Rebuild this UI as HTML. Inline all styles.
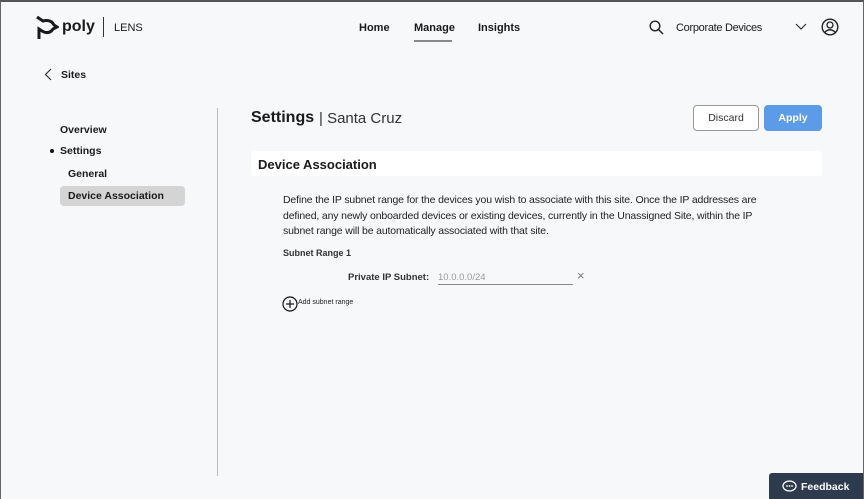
<!DOCTYPE html>
<html><head><style>
*{margin:0;padding:0;box-sizing:border-box}
body{width:864px;height:499px;overflow:hidden;background:#f7f8fa;font-family:"Liberation Sans",sans-serif;color:#1a1a1a;position:relative}
.frame{position:absolute;inset:0;border:1px solid #666;border-top:2px solid #555;border-bottom:none;pointer-events:none}
.a{position:absolute;white-space:nowrap}
.b{font-weight:bold}
</style></head><body>
<svg class="a" style="left:35px;top:15px" width="24" height="26" viewBox="0 0 24 26"><path d="M2 2 L8 6 Q16 4 19 10 L22 12 L18 14 Q14 20 7 16 L4 14 L4 24" fill="none" stroke="#1a1a1a" stroke-width="3"/><circle cx="12" cy="11" r="3" fill="#f7f8fa"/></svg>
<div class="a b" style="left:62px;top:18px;font-size:16px">poly</div>
<div class="a" style="left:103px;top:17px;width:1px;height:20px;background:#333"></div>
<div class="a" style="left:114px;top:22px;font-size:11px">LENS</div>
<div class="a b" style="left:359px;top:22px;font-size:11px">Home</div>
<div class="a b" style="left:414px;top:22px;font-size:11px">Manage</div>
<div class="a" style="left:414px;top:40px;width:38px;height:2px;background:#888"></div>
<div class="a b" style="left:478px;top:22px;font-size:11px">Insights</div>
<svg class="a" style="left:649px;top:20px" width="15" height="15" viewBox="0 0 15 15"><circle cx="6" cy="6" r="4.8" fill="none" stroke="#222" stroke-width="1.4"/><path d="M9.5 9.5 L14 14" stroke="#222" stroke-width="1.5"/></svg>
<div class="a" style="left:676px;top:22px;font-size:11px;letter-spacing:-0.3px">Corporate Devices</div>
<svg class="a" style="left:795px;top:23px" width="12" height="8"><path d="M1 1 L6 6 L11 1" fill="none" stroke="#333" stroke-width="1.2"/></svg>
<svg class="a" style="left:821px;top:18px" width="18" height="18" viewBox="0 0 18 18"><circle cx="9" cy="9" r="7.8" fill="none" stroke="#222" stroke-width="1.4"/><circle cx="9" cy="7" r="3" fill="none" stroke="#222" stroke-width="1.3"/><path d="M3.5 14.5 Q9 9 14.5 14.5" fill="none" stroke="#222" stroke-width="1.3"/></svg>
<svg class="a" style="left:44px;top:68px" width="8" height="13"><path d="M7 1 L1.5 6.5 L7 12" fill="none" stroke="#333" stroke-width="1.2"/></svg>
<div class="a b" style="left:61px;top:69px;font-size:10.5px">Sites</div>
<div class="a b" style="left:60px;top:124px;font-size:10.5px">Overview</div>
<div class="a" style="left:50px;top:149px;width:4px;height:4px;border-radius:50%;background:#111"></div>
<div class="a b" style="left:60px;top:145px;font-size:10.5px">Settings</div>
<div class="a b" style="left:68px;top:168px;font-size:10.5px">General</div>
<div class="a" style="left:60px;top:186px;width:125px;height:20px;border-radius:4px;background:#d4d4d4"></div>
<div class="a b" style="left:68px;top:190px;font-size:10.5px">Device Association</div>
<div class="a" style="left:217px;top:108px;width:1px;height:368px;background:#bbb"></div>
<div class="a b" style="left:251px;top:109px;font-size:16px">Settings</div>
<div class="a" style="left:319px;top:110px;font-size:15px;color:#333">| Santa Cruz</div>
<div class="a" style="left:693px;top:105px;width:66px;height:26px;border:1px solid #999;border-radius:4px;background:#fff;font-size:10.5px;text-align:center;line-height:24px;color:#333">Discard</div>
<div class="a b" style="left:764px;top:105px;width:58px;height:26px;border-radius:4px;background:#5b9be8;color:#fff;font-size:10.5px;text-align:center;line-height:26px">Apply</div>
<div class="a" style="left:251px;top:151px;width:571px;height:25px;background:#fff;border-radius:3px"></div>
<div class="a b" style="left:258px;top:157px;font-size:13px">Device Association</div>
<div class="a" style="left:283px;top:193px;font-size:10.5px;line-height:15.5px;color:#222;letter-spacing:-0.15px">Define the IP subnet range for the devices you wish to associate with this site. Once the IP addresses are<br>defined, any newly onboarded devices or existing devices, currently in the Unassigned Site, within the IP<br>subnet range will be automatically associated with that site.</div>
<div class="a b" style="left:283px;top:248px;font-size:9px;color:#333">Subnet Range 1</div>
<div class="a b" style="left:348px;top:272px;font-size:9.5px;color:#333">Private IP Subnet:</div>
<div class="a" style="left:438px;top:272px;font-size:9.5px;color:#999">10.0.0.0/24</div>
<div class="a" style="left:438px;top:284px;width:135px;height:1px;background:#888"></div>
<div class="a" style="left:577px;top:268px;font-size:13px;color:#777">×</div>
<svg class="a" style="left:282px;top:296px" width="16" height="16"><circle cx="8" cy="8" r="7" fill="none" stroke="#111" stroke-width="1.2"/><path d="M8 4 V12 M4 8 H12" stroke="#111" stroke-width="1.2"/></svg>
<div class="a" style="left:298px;top:299px;font-size:7px;color:#222">Add subnet range</div>
<div class="a" style="left:769px;top:473px;width:95px;height:26px;background:#2e3b4e;border-radius:3px 0 0 0"></div>
<svg class="a" style="left:782px;top:480px" width="15" height="13"><ellipse cx="7.5" cy="6" rx="6.5" ry="5" fill="none" stroke="#fff" stroke-width="1.3"/><circle cx="5" cy="6" r=".9" fill="#fff"/><circle cx="7.5" cy="6" r=".9" fill="#fff"/><circle cx="10" cy="6" r=".9" fill="#fff"/></svg>
<div class="a b" style="left:801px;top:481px;font-size:10.5px;color:#fff">Feedback</div>
<div class="frame"></div>
</body></html>
